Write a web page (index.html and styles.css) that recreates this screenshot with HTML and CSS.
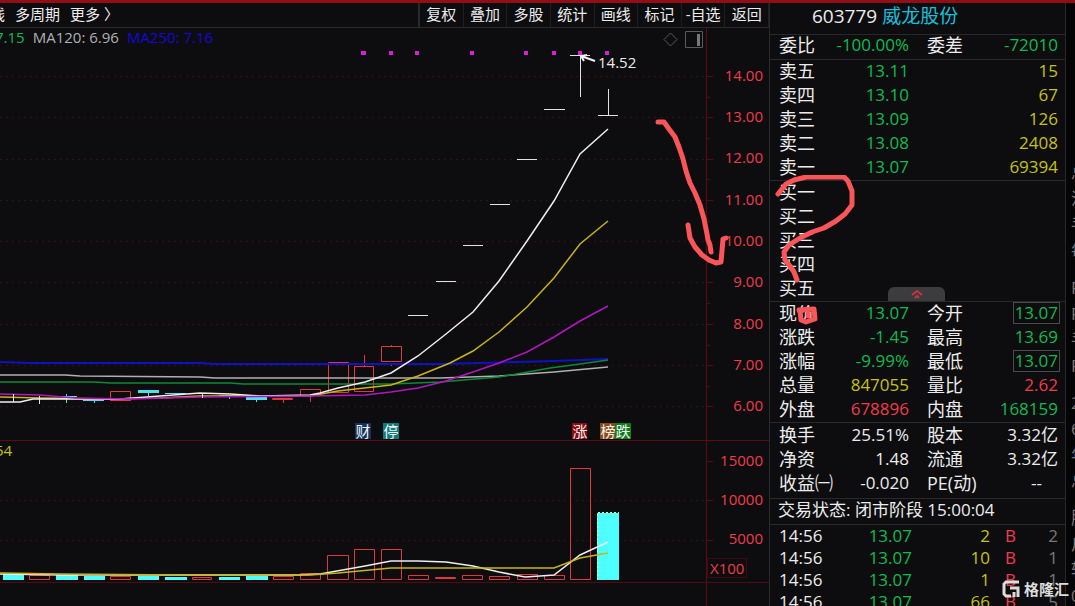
FILE: index.html
```
<!DOCTYPE html>
<html lang="zh-CN">
<head>
    <meta charset="UTF-8">
    <meta name="viewport" content="width=device-width, initial-scale=1.0">
    <title>威龙股份 603779</title>
    <link rel="stylesheet" href="styles.css">
</head>
<body>
    <div class="app">
        <main class="main">
            <nav class="toolbar">
                <div class="periods">
                    <button>线</button>
                    <button>多周期</button>
                    <button>更多 〉</button>
                </div>
                <div class="tools">
                    <button>复权</button>
                    <button>叠加</button>
                    <button>多股</button>
                    <button>统计</button>
                    <button>画线</button>
                    <button>标记</button>
                    <button>-自选</button>
                    <button>返回</button>
                </div>
            </nav>

            <!-- K线 -->
            <section class="pane price">
                <div class="legend">
                    <span class="green">7.15</span>
                    <span class="grey">MA120: 6.96</span>
                    <span class="blue">MA250: 7.16</span>
                </div>
                <svg class="plot" viewBox="0 28 706 412">
                    <path class="gridline" d="M0 76.500H706M0 117.500H706M0 159.500H706M0 200.500H706M0 241.500H706M0 282.500H706M0 324.500H706M0 365.500H706M0 406.500H706"/>
                    <path class="tick" d="M706 76.500h7M706 117.500h7M706 159.500h7M706 200.500h7M706 241.500h7M706 282.500h7M706 324.500h7M706 365.500h7M706 406.500h7M706 97.500h4M706 138.500h4M706 179.500h4M706 221.500h4M706 262.500h4M706 303.500h4M706 345.500h4M706 386.500h4"/>

                    <g class="marks">
                        <path d="M361 51h5v4h-5zM389 51h4v4h-4zM415 51h4v4h-4zM470 51h4v4h-4zM524 51h4v4h-4zM552 51h4v4h-4zM578 51h4v4h-4zM605 51h4v4h-4z"/>
                    </g>

                    <g class="down">
                        <path d="M56 396.500h21M66.500 394v9M83 400.500h21M94.500 400v3M138 391.500h21M148.500 391v5M165 393.500h21M219 395.500h21M229.500 395v4M246 398.500h21M256.500 398v4"/>
                        <path class="thick" d="M138 391.500h21M246 398.500h21"/>
                    </g>
                    <g class="up">
                        <path d="M110.500 391.500h20v9h-20zM110 400.500h21M272.500 398.500h20v1h-20zM283.500 399v4M300.500 389.500h20v6h-20zM310.500 396v6M328.500 362.500h20v30h-20zM354.500 366.500h19v25h-19zM364.500 355v11M381.500 346.500h20v15h-20zM391.500 345v1M391.500 363v3"/>
                    </g>

                    <polyline class="line-blue" points="0,362 30,363 200,363 215,364 440,364 554,361 608,359"/>
                    <polyline class="line-grey" points="0,375 65,375 80,376 200,377 215,378 440,378 499,376 554,372 608,367"/>
                    <polyline class="line-green" points="0,382 95,382 110,383 230,383 243,384 391,384 440,382 499,377 550,368 580,364 608,360"/>
                    <polyline class="line-yellow" points="0,397 40,398 110,399 160,398 200,396 310,396 338,391 391,385 418,376 450,363 473,351 499,332 527,307 554,278 580,244 608,221"/>
                    <polyline class="line-white" points="0,402 20,402 33,399 120,399 160,396 200,393 230,394 260,396 310,395 320,393 338,388 365,382 391,373 418,356 446,334 473,312 499,281 527,241 554,201 580,154 608,129"/>
                    <polyline class="line-magenta" points="0,394 40,395 75,398 130,399 200,397 310,396 365,395 391,392 418,388 446,381 473,372 499,363 527,352 554,337 580,321 608,306"/>

                    <path class="flat" d="M13.500 394v8M39.500 396v8M202.500 393v5M408 315.500h20M436 281.500h20M463 245.500h20M490 204.500h20M517 159.500h20M544 109.500h21M570 55.500h20M580.500 55v42M598 115.500h20M608.500 89v26"/>
                    <path class="pointer" d="M595 61L581 56M587 55L581 56L584 61"/>
                    <text class="peak" x="598" y="68">14.52</text>

                    <path class="icon" d="M670.500 33L677 39.500L670.500 46L664 39.500zM685.500 31.500h17v16h-17z"/>
                    <path class="icon-bar" d="M697 34h3v12h-3z"/>

                    <g class="events">
                        <rect class="ev-navy" x="355" y="423" width="16" height="16"/>
                        <rect class="ev-teal" x="383" y="423" width="16" height="16"/>
                        <rect class="ev-red" x="572" y="423" width="15" height="16"/>
                        <rect class="ev-brown" x="600" y="423" width="15" height="16"/>
                        <rect class="ev-green" x="615" y="423" width="16" height="16"/>
                        <text x="363" y="437">财</text>
                        <text x="391" y="437">停</text>
                        <text x="580" y="437">涨</text>
                        <text x="608" y="437">榜</text>
                        <text x="623" y="437">跌</text>
                    </g>

                    <g class="pen">
                        <path d="M658 122L664 122L669 129L675 137L679 147L683 159L686 171L690 183L695 193L700 205L704 219L707 234L708 240L710 245L711 252"/>
                        <path d="M688 225L690 238L695 247L702 255L709 260L716 263L721 262L722 251L723 239L726 238"/>
                    </g>
                </svg>
                <ol class="axis">
                    <li>14.00</li>
                    <li>13.00</li>
                    <li>12.00</li>
                    <li>11.00</li>
                    <li>10.00</li>
                    <li>9.00</li>
                    <li>8.00</li>
                    <li>7.00</li>
                    <li>6.00</li>
                </ol>
            </section>

            <!-- 成交量 -->
            <section class="pane volume">
                <div class="legend"><span class="yellow">54</span></div>
                <svg class="plot" viewBox="0 441 706 165">
                    <path class="gridline" d="M0 500.500H706M0 540.500H706"/>
                    <path class="tick" d="M706 461.500h7M706 500.500h7M706 540.500h7"/>
                    <path class="base" d="M0 582.500H769"/>
                    <path class="fill-down" d="M3 574h21v6h-21zM56 575h22v5h-22zM84 576h21v4h-21zM138 576h21v4h-21zM165 577h22v3h-22zM219 577h21v3h-21zM246 576h22v4h-22zM597 513h22v67h-22z"/>
                    <path class="last-edge" d="M597.500 580V512.500H619"/>
                    <g class="up">
                        <path d="M29.500 575.500h20v4h-20zM110.500 576.500h20v3h-20zM192.500 577.500h19v2h-19zM273.500 576.500h20v3h-20zM300.500 573.500h20v6h-20zM327.500 555.500h21v24h-21zM354.500 549.500h20v30h-20zM381.500 549.500h20v30h-20zM408.500 575.500h20v4h-20zM435.500 577.500h20v1h-20zM462.500 575.500h20v4h-20zM489.500 576.500h20v3h-20zM517.500 574.500h20v5h-20zM544.500 575.500h20v4h-20zM570.500 468.500h20v111h-20z"/>
                    </g>
                    <polyline class="line-white" points="0,574 60,575 300,575 320,574 365,566 391,561 418,561 446,562 473,566 499,572 525,577 540,576 554,575 580,555 608,542"/>
                    <polyline class="line-yellow" points="0,573 60,574 180,575 310,575 338,573 391,568 554,568 580,558 608,553"/>
                </svg>
                <ol class="axis">
                    <li>15000</li>
                    <li>10000</li>
                    <li>5000</li>
                    <li class="unit">X100</li>
                </ol>
            </section>
        </main>

        <aside class="quote">
            <h1><span>603779</span> <a href="#">威龙股份</a></h1>

            <dl class="stats ratio">
                <div><dt>委比</dt><dd class="green">-100.00%</dd></div>
                <div><dt>委差</dt><dd class="green">-72010</dd></div>
            </dl>

            <table class="book">
                <tr><th>卖五</th><td class="green">13.11</td><td class="yellow">15</td></tr>
                <tr><th>卖四</th><td class="green">13.10</td><td class="yellow">67</td></tr>
                <tr><th>卖三</th><td class="green">13.09</td><td class="yellow">126</td></tr>
                <tr><th>卖二</th><td class="green">13.08</td><td class="yellow">2408</td></tr>
                <tr><th>卖一</th><td class="green">13.07</td><td class="yellow">69394</td></tr>
            </table>

            <div class="buy">
                <table class="book">
                    <tr><th>买一</th><td></td><td></td></tr>
                    <tr><th>买二</th><td></td><td></td></tr>
                    <tr><th>买三</th><td></td><td></td></tr>
                    <tr><th>买四</th><td></td><td></td></tr>
                    <tr><th>买五</th><td></td><td></td></tr>
                </table>
                <button class="fold" aria-label="收起">
                    <svg width="12" height="10" viewBox="0 0 12 10"><path d="M1 6L6 2L11 6M4 9L6 7L8 9"/></svg>
                </button>
                <svg class="scribble" width="90" height="150" viewBox="770 175 90 150">
                    <path d="M778 194L786 184L794 180L806 177L844 177L848 181L852 191L852 205L845 214L836 221L824 228L812 232L800 238L789 245L784 252L785 260L790 266L794 272L797 280"/>
                    <path class="blob" d="M799 310L814 309L815 319L806 322L801 320L800 311"/>
                    <path class="blob" d="M808 313v3"/>
                </svg>
            </div>

            <dl class="stats">
                <div><dt>现价</dt><dd class="green">13.07</dd></div>
                <div><dt>今开</dt><dd class="green boxed">13.07</dd></div>
                <div><dt>涨跌</dt><dd class="green">-1.45</dd></div>
                <div><dt>最高</dt><dd class="green">13.69</dd></div>
                <div><dt>涨幅</dt><dd class="green">-9.99%</dd></div>
                <div><dt>最低</dt><dd class="green boxed">13.07</dd></div>
                <div><dt>总量</dt><dd class="yellow">847055</dd></div>
                <div><dt>量比</dt><dd class="red">2.62</dd></div>
                <div><dt>外盘</dt><dd class="red">678896</dd></div>
                <div><dt>内盘</dt><dd class="green">168159</dd></div>
            </dl>

            <dl class="stats base-info">
                <div><dt>换手</dt><dd>25.51%</dd></div>
                <div><dt>股本</dt><dd>3.32亿</dd></div>
                <div><dt>净资</dt><dd>1.48</dd></div>
                <div><dt>流通</dt><dd>3.32亿</dd></div>
                <div><dt>收益㈠</dt><dd>-0.020</dd></div>
                <div><dt>PE(动)</dt><dd class="none">--</dd></div>
            </dl>

            <p class="status">交易状态: 闭市阶段 15:00:04</p>

            <table class="deals">
                <tr><td>14:56</td><td class="green">13.07</td><td class="yellow">2</td><td class="red">B</td><td class="dim">2</td></tr>
                <tr><td>14:56</td><td class="green">13.07</td><td class="yellow">10</td><td class="red">B</td><td class="dim">1</td></tr>
                <tr><td>14:56</td><td class="green">13.07</td><td class="yellow">1</td><td class="red">B</td><td class="dim">1</td></tr>
                <tr><td>14:56</td><td class="green">13.07</td><td class="yellow">66</td><td class="red">B</td><td class="dim">5</td></tr>
            </table>
        </aside>

        <div class="edge">
            <ul><li>总</li><li>流</li><li>手</li><li>每</li></ul>
            <ul><li>P</li><li>P</li><li>手</li><li>P</li></ul>
            <ul><li>2</li><li>6</li><li>年</li><li>总</li></ul>
            <ul><li>股</li><li>户</li><li>转</li><li>0</li></ul>
        </div>

        <div class="watermark">
            <svg width="18" height="18" viewBox="0 0 18 18">
                <path d="M17 2H4L2 4V14L4 16H9M8 8H16V17M12 12V17"/>
            </svg>
            <span>格隆汇</span>
        </div>
    </div>
</body>
</html>
```

FILE: styles.css
```
:root {
    --bg: #0d0d0f;
    --line: #29292c;
    --text: #ececec;
    --green: #0cbc50;
    --yellow: #c6c210;
    --red: #f03c4a;
    --axis: #5e0a12;
    --pen: #fa5558;
}

* {
    box-sizing: border-box;
    margin: 0;
    padding: 0;
}

body {
    background: var(--bg);
    color: var(--text);
    font-family: "Open Sans", "Noto Sans CJK SC", sans-serif;
    font-size: 17px;
}

.app {
    position: relative;
    display: grid;
    grid-template-columns: minmax(0, 1fr) 297px 9px;
    height: 100vh;
    border-top: 3px solid #930d17;
    overflow: hidden;
}

button {
    background: none;
    border: none;
    color: inherit;
    font: inherit;
    white-space: nowrap;
    cursor: pointer;
}

ol, ul {
    list-style: none;
}

.green { color: var(--green); }
.yellow { color: var(--yellow); }
.red { color: var(--red); }
.grey { color: #b0b0b0; }
.blue { color: #1508d8; }
.dim { color: #77777a; }

/* 工具栏 */
.toolbar {
    display: flex;
    justify-content: space-between;
    height: 25px;
    border-bottom: 1px solid var(--line);
    font-size: 15px;
    line-height: 20px;
}

.toolbar button {
    padding-bottom: 2px;
}

.periods {
    display: flex;
    gap: 10px;
    margin-left: -10px;
}

.tools {
    display: flex;
    width: 351px;
    border-left: 2px solid var(--line);
}

.tools button {
    flex: 1;
    border-right: 1px solid #1f1f22;
}

/* 图表 */
.pane {
    position: relative;
    display: flex;
}

.price {
    border-bottom: 1px solid var(--axis);
}

.legend {
    position: absolute;
    top: 0;
    left: 0;
    display: flex;
    gap: 8px;
    margin-left: -5px;
    font-size: 15px;
    line-height: 18px;
}

.plot {
    position: relative;
    z-index: 1;
    flex: 1;
    min-width: 0;
    overflow: visible;
}

.plot path,
.plot polyline {
    fill: none;
    stroke-width: 1;
}

.axis {
    display: flex;
    flex-direction: column;
    width: 63px;
    padding-right: 6px;
    border-left: 1px solid var(--axis);
    color: var(--red);
    font-size: 15px;
    text-align: right;
}

.price .axis {
    padding-top: 26px;
    padding-bottom: 14px;
}

.price .axis li {
    flex: 1;
    display: flex;
    align-items: center;
    justify-content: flex-end;
}

.volume .axis li {
    line-height: 39px;
}

.volume .axis .unit {
    align-self: flex-start;
    padding: 0 2px;
    border: 1px solid #3c0c12;
    line-height: 18px;
}

.plot .gridline { stroke: #35101a; stroke-dasharray: 2 4; }
.plot .tick, .plot .base { stroke: #4e0c14; }
.plot .marks path { fill: #d81fd8; }
.plot .up path { stroke: #e0363c; }
.plot .down path { stroke: #4be3ea; }
.plot .down .thick { stroke-width: 3; }
.plot .fill-down { fill: #4dffff; }
.plot .last-edge { stroke: #d8f4c0; stroke-dasharray: 2 2; }
.plot .flat { stroke: #e2e2e2; }
.plot .pointer { stroke: #f0f0f0; stroke-width: 2; }
.plot .icon { stroke: #5a5a5c; }
.plot .icon-bar { fill: #77777a; }
.plot .line-blue { stroke: #1010c4; stroke-width: 2; }
.plot .line-grey { stroke: #b0b0b0; }
.plot .line-green { stroke: #0d8a35; }
.plot .line-yellow { stroke: #c8b416; }
.plot .line-white { stroke: #eeeeee; }
.plot .line-magenta { stroke: #b316c0; }
.plot .line-grey, .plot .line-green, .plot .line-yellow,
.plot .line-white, .plot .line-magenta { stroke-width: 1.5; }

.peak {
    fill: var(--text);
    font-size: 15px;
}

.events text {
    fill: #f2f2f2;
    font-size: 15px;
    text-anchor: middle;
}

.ev-navy { fill: #14325c; }
.ev-teal { fill: #0d7c80; }
.ev-red { fill: #8c0a10; }
.ev-brown { fill: #8a4a14; }
.ev-green { fill: #0b7d1c; }

.plot .pen path,
.scribble path {
    fill: none;
    stroke: var(--pen);
    stroke-width: 5;
    stroke-linecap: round;
    stroke-linejoin: round;
}

/* 盘口 */
.quote {
    border-left: 1px solid var(--line);
    border-right: 1px solid var(--line);
}

.quote h1 {
    height: 31px;
    padding-left: 42px;
    font-size: 19px;
    font-weight: 400;
    line-height: 26px;
}

.quote h1 a {
    color: #16c0dc;
    text-decoration: none;
}

.book,
.stats,
.deals {
    width: 100%;
    border-top: 1px solid var(--line);
}

.stats {
    display: grid;
    grid-template-columns: 130px 1fr;
    column-gap: 18px;
    padding: 0 7px 0 9px;
}

.stats div {
    display: flex;
    align-items: flex-start;
    justify-content: space-between;
    height: 24px;
}

.stats dt,
.book th {
    font-size: 18px;
    font-weight: 400;
    line-height: 22px;
    white-space: nowrap;
}

.stats dd {
    line-height: 22px;
}

.ratio dt,
.ratio dd {
    line-height: 20px;
}

.stats .boxed {
    height: 18px;
    margin-top: 2px;
    outline: 1px solid #4a4a4d;
    outline-offset: 1px;
    line-height: 18px;
}

.stats .none {
    padding-right: 16px;
}

.base-info {
    padding-top: 1px;
    padding-bottom: 2px;
}

.book,
.deals {
    display: block;
    padding: 0 7px 0 9px;
    border-spacing: 0;
}

.book tr {
    display: grid;
    grid-template-columns: 50px 80px 1fr;
    height: 24px;
    line-height: 21px;
}

.book tbody,
.deals tbody {
    display: block;
}

.book th {
    text-align: left;
}

.book td {
    text-align: right;
}

.buy {
    position: relative;
}

.fold {
    position: absolute;
    left: 118px;
    bottom: 0;
    width: 57px;
    height: 14px;
    background: #3c3c3f;
    border-radius: 6px 6px 0 0;
    line-height: 0;
}

.fold path {
    fill: none;
    stroke: #c8343c;
    stroke-width: 2;
}

.scribble {
    position: absolute;
    top: -5px;
    left: 0;
    z-index: 1;
}

.status {
    height: 26px;
    padding-left: 8px;
    border-top: 1px solid var(--line);
    line-height: 22px;
}

.deals tr {
    display: grid;
    grid-template-columns: 50px 83px 78px 32px 1fr;
    line-height: 22px;
    text-align: right;
}

.deals td:first-child {
    text-align: left;
}

.deals td:nth-child(4) {
    padding-right: 6px;
}

/* 右侧被裁掉的一列 */
.edge {
    padding-top: 157px;
    background: #050506;
    overflow: hidden;
}

.edge ul {
    margin-bottom: 11px;
    padding-left: 5px;
    color: #77777a;
    line-height: 26px;
    white-space: nowrap;
}

.watermark {
    position: absolute;
    right: 6px;
    bottom: 5px;
    z-index: 2;
    display: flex;
    align-items: center;
    gap: 4px;
    color: #dcdcdc;
    font-size: 15px;
    font-weight: 700;
    line-height: 24px;
}

.watermark path {
    fill: none;
    stroke: currentColor;
    stroke-width: 3;
}
```
